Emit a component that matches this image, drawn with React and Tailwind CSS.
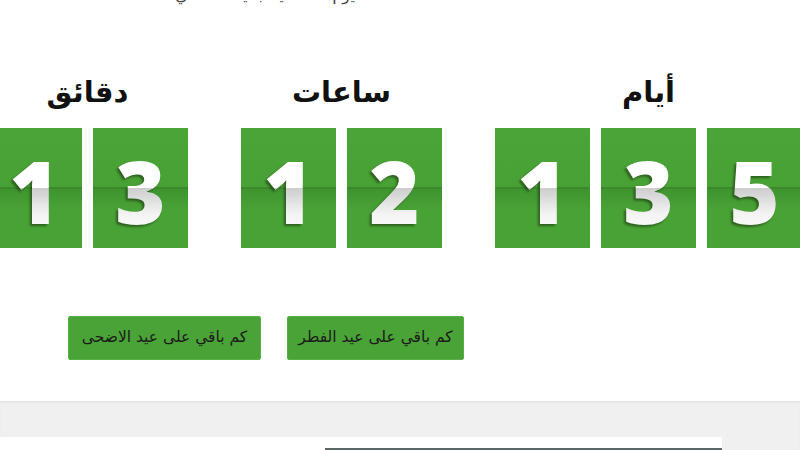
import React from "react";

const arabic = { fontFamily: '"DejaVu Sans", "Noto Sans", sans-serif' };
const digitFont = { fontFamily: '"Open Sans", "Liberation Sans", sans-serif' };

function Card({ d }) {
  return (
    <div className="relative w-[95px] h-[120px] shrink-0 bg-[linear-gradient(to_bottom,#4ba437_0%,#48a135_49.5%,#3a8a2b_49.5%,#3a8a2b_50.5%,#3f942f_51%,#49a236_68%,#49a236_100%)]">
      <div
        className="absolute inset-0 flex items-center justify-center pt-[6px] text-[86px] font-extrabold leading-none bg-[linear-gradient(to_bottom,#ffffff_0%,#ffffff_50%,#cdcdcd_50%,#f4f4f4_72%,#ffffff_100%)] bg-clip-text text-transparent [filter:drop-shadow(-2px_2px_1px_rgba(20,40,10,0.55))]"
        style={digitFont}
      >
        {d}
      </div>
    </div>
  );
}

function Group({ label, digits }) {
  return (
    <div className="flex flex-col items-center shrink-0">
      <div
        className="h-[40px] leading-[40px] text-[29px] font-bold text-[#111]"
        style={arabic}
        dir="rtl"
      >
        {label}
      </div>
      <div className="mt-[16px] flex flex-row gap-[11px]" dir="ltr">
        {digits.map((d, i) => (
          <Card key={i} d={d} />
        ))}
      </div>
    </div>
  );
}

export default function App() {
  return (
    <div className="w-[800px] h-[450px] overflow-hidden bg-white flex flex-col">
      <div className="h-[72px] overflow-hidden">
        <div
          className="-mt-[15px] ml-[175px] w-[180px] flex justify-between text-[16px] leading-[20px] text-[#444]"
          style={arabic}
          dir="rtl"
        >
          <span>يوم</span>
          <span>عيد جديد</span>
          <span>في</span>
        </div>
      </div>

      <div className="w-[816px] -ml-[14px] flex flex-row gap-[53px]" dir="rtl">
        <Group label="أيام" digits={["1", "3", "5"]} />
        <Group label="ساعات" digits={["1", "2"]} />
        <Group label="دقائق" digits={["1", "3"]} />
      </div>

      <div className="mt-[68px] flex flex-row gap-[26px] pr-[336px]" dir="rtl">
        <button
          className="w-[177px] h-[44px] bg-[#4aa336] border border-[#5aae47] rounded-[2px] text-[15.5px] text-[#1b1b1b] flex items-center justify-center"
          style={arabic}
        >
          كم باقي على عيد الفطر
        </button>
        <button
          className="w-[193px] h-[44px] bg-[#4aa336] border border-[#5aae47] rounded-[2px] text-[15.5px] text-[#1b1b1b] flex items-center justify-center"
          style={arabic}
        >
          كم باقي على عيد الاضحى
        </button>
      </div>

      <div className="mt-[41px] flex-1 bg-[#f0f0f0] border-t border-[#e4e4e4] shadow-[inset_0_1px_2px_rgba(0,0,0,0.04)] flex flex-col">
        <div className="mt-[35px] w-[722px] flex-1 bg-white flex flex-col justify-end">
          <div className="ml-[325px] h-[2px] bg-[#5b6767]" />
        </div>
      </div>
    </div>
  );
}
